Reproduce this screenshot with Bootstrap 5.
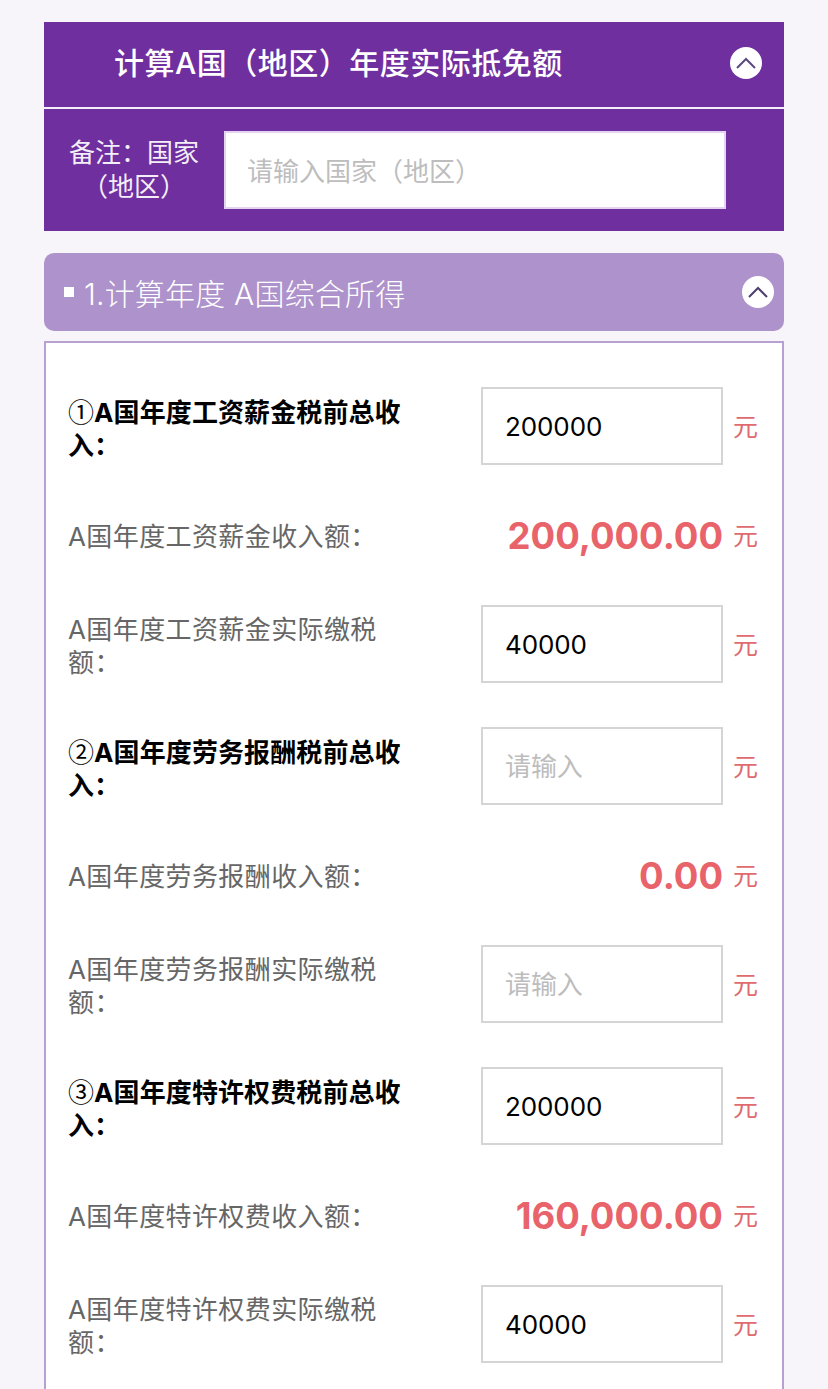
<!DOCTYPE html>
<html lang="zh">
<head>
<meta charset="utf-8">
<title>计算A国（地区）年度实际抵免额</title>
<link href="https://cdn.jsdelivr.net/npm/bootstrap@5.3.0/dist/css/bootstrap.min.css" rel="stylesheet">
<style>
html,body{height:1389px;overflow:hidden}
body{background:#f7f5fa;font-family:Inter,"Noto Sans CJK SC",sans-serif;font-size:26px;line-height:33px}
.page-wrap{padding:22px 44px 0}
.main-head{background:#6f2f9f;color:#fff;height:85px;padding:0 22px 3px 70px;font-size:30px;font-weight:500;letter-spacing:.5px}
.head-rule{height:2px;background:#f4eef9}
.main-body{background:#6f2f9f;color:#f4eef9;height:122px;padding:22px 0 0 24px}
.note-label{width:132px;text-align:center;font-size:26px;line-height:34px;margin-right:24px;flex:none;padding-top:2px}
.note-input{width:502px;height:78px;border:2px solid #e4d4f2;border-radius:0;padding:2px 22px 0 21px;font-size:26px;flex:none}
.sub-head{background:#ae92cb;color:#fff;height:78px;margin-top:22px;border-radius:10px;padding:0 10px 0 20px;font-size:30px;font-weight:300}
.sub-title{padding-top:4px;letter-spacing:.2px}
.sq{width:10px;height:10px;background:#fff;margin-right:10px;flex:none}
.round-btn{width:32px;height:32px;border-radius:50%;background:#fff;flex:none}
.form-box{margin-top:10px;border:2px solid #b9a0d3;border-bottom:0;background:#fff;padding:44px 22px 60px}
.item-row{margin-bottom:44px;min-height:50px}
.item-label{width:345px;flex:none;color:#666;margin-right:68px;letter-spacing:.4px;padding-top:3px}
.item-label.strong{color:#000;font-weight:700;letter-spacing:.1px}
.circ{font-family:"Noto Sans CJK SC",sans-serif;font-weight:400}
.num-input{width:242px;height:78px;border:2px solid #d5d5d5;border-radius:0;padding:0 22px;font-size:26px;color:#000;flex:none;letter-spacing:-.1px}
.note-input::placeholder,.num-input::placeholder{color:#bdbdbd;opacity:1}
.calc-value{width:242px;flex:none;text-align:right;color:#e8636a;font-size:36.5px;font-weight:700;line-height:50px;padding-top:2px}
.unit{color:#e06a70;margin-left:10px;font-size:25px;width:26px;flex:none;padding-top:2px}
</style>
</head>
<body>
<div class="page-wrap">
  <div class="main-head d-flex align-items-center justify-content-between">
    <span>计算A国（地区）年度实际抵免额</span>
    <span class="round-btn d-flex align-items-center justify-content-center"><svg width="22" height="14" viewBox="0 0 22 14"><path d="M2 12 11 3l9 9" fill="none" stroke="#5b4a7e" stroke-width="2"/></svg></span>
  </div>
  <div class="head-rule"></div>
  <div class="main-body d-flex align-items-start">
    <div class="note-label align-self-center mb-4">备注：国家（地区）</div>
    <input class="form-control note-input" placeholder="请输入国家（地区）">
  </div>

  <div class="sub-head d-flex align-items-center">
    <span class="sq"></span>
    <span class="flex-grow-1 sub-title">1.计算年度 A国综合所得</span>
    <span class="round-btn d-flex align-items-center justify-content-center"><svg width="22" height="14" viewBox="0 0 22 14"><path d="M2 12 11 3l9 9" fill="none" stroke="#4d3f6b" stroke-width="2"/></svg></span>
  </div>

  <div class="form-box">
    <div class="item-row d-flex align-items-center"><div class="item-label strong"><span class="circ">①</span>A国年度工资薪金税前总收入：</div><input class="form-control num-input" value="200000"><span class="unit">元</span></div>
    <div class="item-row d-flex align-items-center"><div class="item-label">A国年度工资薪金收入额：</div><div class="calc-value">200,000.00</div><span class="unit">元</span></div>
    <div class="item-row d-flex align-items-center"><div class="item-label">A国年度工资薪金实际缴税额：</div><input class="form-control num-input" value="40000"><span class="unit">元</span></div>
    <div class="item-row d-flex align-items-center"><div class="item-label strong"><span class="circ">②</span>A国年度劳务报酬税前总收入：</div><input class="form-control num-input" placeholder="请输入"><span class="unit">元</span></div>
    <div class="item-row d-flex align-items-center"><div class="item-label">A国年度劳务报酬收入额：</div><div class="calc-value">0.00</div><span class="unit">元</span></div>
    <div class="item-row d-flex align-items-center"><div class="item-label">A国年度劳务报酬实际缴税额：</div><input class="form-control num-input" placeholder="请输入"><span class="unit">元</span></div>
    <div class="item-row d-flex align-items-center"><div class="item-label strong"><span class="circ">③</span>A国年度特许权费税前总收入：</div><input class="form-control num-input" value="200000"><span class="unit">元</span></div>
    <div class="item-row d-flex align-items-center"><div class="item-label">A国年度特许权费收入额：</div><div class="calc-value">160,000.00</div><span class="unit">元</span></div>
    <div class="item-row d-flex align-items-center"><div class="item-label">A国年度特许权费实际缴税额：</div><input class="form-control num-input" value="40000"><span class="unit">元</span></div>
  </div>
</div>
</body>
</html>
